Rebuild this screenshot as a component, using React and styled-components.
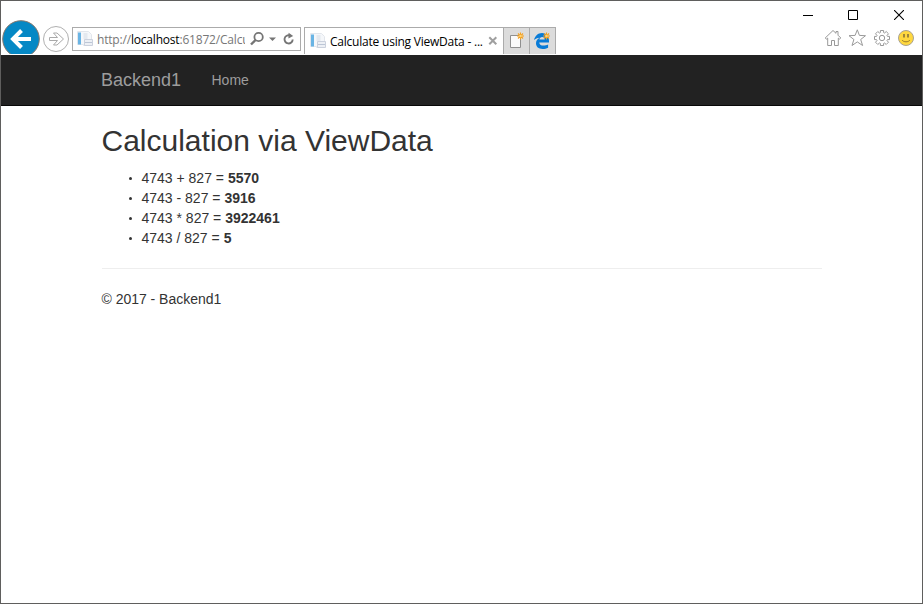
import React from "react";
import styled, { createGlobalStyle } from "styled-components";

const GlobalStyle = createGlobalStyle`
  * { box-sizing: border-box; }
  body { margin: 0; background: #fff; overflow: hidden; }
  svg { display: block; flex: none; }
`;

const BrowserWindow = styled.div`
  width: 923px;
  height: 604px;
  border: 1px solid #5f5e5d;
  background: #fff;
  display: flex;
  flex-direction: column;
  font-family: "Liberation Sans", Arial, sans-serif;
`;

const TitleBar = styled.div`
  display: flex;
  justify-content: flex-end;
  height: 19px;
  flex: none;
`;

const WindowButton = styled.div`
  width: ${(p) => p.$width}px;
  height: 28px;
  display: flex;
  align-items: center;
  justify-content: center;
`;

const Toolbar = styled.div`
  display: flex;
  height: 35px;
  flex: none;
  padding-bottom: 1px;
`;

const NavButtons = styled.div`
  display: flex;
  width: 71px;
  height: 34px;
  overflow: hidden;
`;

const AddressBar = styled.div`
  display: flex;
  align-items: center;
  width: 229px;
  height: 24px;
  margin-top: 7px;
  padding-left: 4px;
  border: 1px solid #ababab;
  background: #fff;
`;

const Url = styled.div`
  width: 148px;
  height: 20px;
  margin-left: 4px;
  overflow: hidden;
  white-space: nowrap;
  font: 12px/22px "Open Sans", "Noto Sans", sans-serif;
  letter-spacing: -0.19px;
  color: #777;
`;

const Host = styled.span`
  color: #000;
`;

const AddressActions = styled.div`
  display: flex;
  margin-left: 5px;
`;

const TabStrip = styled.div`
  display: flex;
  height: 27px;
  margin: 7px 0 0 3px;
`;

const ActiveTab = styled.div`
  display: flex;
  align-items: center;
  width: 199px;
  padding-left: 5px;
  border: solid #ababab;
  border-width: 1px 0 0 1px;
`;

const TabTitle = styled.div`
  width: 155px;
  margin: 2px 3px 0 4px;
  white-space: nowrap;
  font: 12px/20px "Open Sans", "Noto Sans", sans-serif;
  letter-spacing: -0.22px;
  color: #000;
`;

const TabButton = styled.div`
  display: flex;
  align-items: center;
  justify-content: center;
  width: 26px;
  border: solid #ababab;
  border-width: 1px 0 0 1px;
  background: #dcdcdc;
  &:last-child {
    width: 27px;
    border-right-width: 1px;
  }
`;

const Tools = styled.div`
  display: flex;
  gap: 6.4px;
  margin: 9px 7px 0 auto;
`;

const Navbar = styled.nav`
  display: flex;
  height: 51px;
  flex: none;
  padding: 15px 100px;
  border-bottom: 1px solid #080808;
  background: #222;
  color: #9d9d9d;
  line-height: 20px;
`;

const Brand = styled.div`
  width: 110.5px;
  font-size: 18px;
`;

const NavLink = styled.div`
  font-size: 14px;
`;

const Page = styled.main`
  padding: 0 100.5px;
  color: #333;
  font-size: 14px;
  line-height: 20px;
`;

const Heading = styled.h2`
  margin: 18px 0 10px;
  font-size: 30px;
  font-weight: 500;
  line-height: 33px;
`;

const Results = styled.ul`
  margin: 0;
  padding: 1px 0 0 26px;
  list-style: none;
`;

const Result = styled.li`
  display: flex;
  align-items: center;
  height: 20px;
  white-space: pre;
  &::before {
    content: "";
    width: 3.6px;
    height: 3.6px;
    margin: 1px 9px 0 1.4px;
    border-radius: 50%;
    background: #333;
  }
`;

const Rule = styled.hr`
  margin: 20px 0;
  border: 0;
  border-top: 1px solid #eee;
`;

const Footer = styled.footer`
  letter-spacing: -0.02px;
`;

const BackIcon = () => (
  <svg width="40" height="38" viewBox="1 20 40 38">
    <circle cx="21" cy="39" r="18.3" fill="#0588c5" stroke="#86776d" strokeWidth="1" />
    <path d="M31 39H13M21.5 30.5L13 39l8.5 8.5" fill="none" stroke="#fff" strokeWidth="4" />
  </svg>
);

const ForwardIcon = () => (
  <svg width="30" height="38" viewBox="41 20 30 38">
    <circle cx="56" cy="39" r="12.5" fill="#fff" stroke="#b0b0b0" />
    <path d="M49.5 37.5h8l-4-4.5h3.5l6.5 6-6.5 6h-3.5l4-4.5h-8z" fill="#fff" stroke="#aaa" />
  </svg>
);

const PageIcon = () => (
  <svg width="16" height="16" viewBox="0 0 16 16">
    <path d="M.5.5h11l3 3v11H6.5v-1h-6z" fill="#f5f7fa" stroke="#e2e6ec" />
    <path d="M1 1.5h3v12H1z" fill="#69b4e4" />
    <path d="M6.5 3h4M6.5 5h4M6.5 7h4" stroke="#d3dae4" />
    <path d="M7.5 8.5h8v6h-8z" fill="#edf0f5" stroke="#cbd1dd" />
    <path d="M8 11.5h7" stroke="#bcc6d6" />
  </svg>
);

const SearchIcon = () => (
  <svg width="15" height="16" viewBox="0 0 15 16">
    <circle cx="8.6" cy="6" r="4.2" fill="none" stroke="#757575" strokeWidth="1.8" />
    <path d="M5.5 9L1 13.5" stroke="#757575" strokeWidth="2.4" />
  </svg>
);

const CaretIcon = () => (
  <svg width="16" height="16" viewBox="0 0 16 16">
    <path d="M4 6.5h7L7.5 10z" fill="#757575" />
  </svg>
);

const RefreshIcon = () => (
  <svg width="16" height="16" viewBox="0 0 16 16">
    <path d="M9 4.5A4.1 4.1 0 1 0 11.7 8.5" fill="none" stroke="#757575" strokeWidth="1.9" />
    <path d="M7.6 1.8L12.2 5 7.4 7.6z" fill="#757575" />
  </svg>
);

const CloseTabIcon = () => (
  <svg width="10" height="10" viewBox="0 0 10 10">
    <path d="M1.3 1.3l7 7M8.3 1.3l-7 7" stroke="#9f9f9f" strokeWidth="2" />
  </svg>
);

const Spark = () => (
  <g>
    <path d="M11.5 .5v7M8 4h7M9 1.5l5 5M14 1.5l-5 5" stroke="#f5a01d" strokeWidth="1.1" />
    <circle cx="11.5" cy="4" r="1.3" fill="#ffd477" />
  </g>
);

const NewTabIcon = () => (
  <svg width="16" height="18" viewBox="0 0 16 18">
    <path d="M1.5 3.5h10v12h-10z" fill="#fafafa" stroke="#909090" />
    <Spark />
  </svg>
);

const EdgeIcon = () => (
  <svg width="18" height="18" viewBox="1 0 18 18">
    <path
      d="M1 8C2 3.8 5 1 9 1c4.5 0 7 3.2 7 8v1.4H6.2c.3 2.3 2 3.2 4.3 3.2 1.7 0 3.2-.5 4.6-1.2v3.3C13.5 16.5 11.7 17 9.6 17 5.4 17 3 14.8 3 11.3 3 8.8 4.4 6.8 6.7 5.7 4.3 5.8 2.4 6.7 1 8zm5.4-.5h5.3C11.7 5.9 10.8 5 9.2 5S6.6 6 6.4 7.5z"
      fill="#087bd7"
    />
    <g transform="translate(2 0)">
      <Spark />
    </g>
  </svg>
);

const HomeIcon = () => (
  <svg width="18" height="18" viewBox="0 0 18 18">
    <path d="M9 1.5L1.2 9l1.1 1.1 1.4-1v7.4h3.8v-5h3v5h3.8V9.1l1.4 1 1.1-1.1L14 6.2V2.5h-2v1.8z" fill="#fff" stroke="#999" strokeLinejoin="round" />
  </svg>
);

const StarIcon = () => (
  <svg width="18" height="18" viewBox="0 0 18 18">
    <path d="M9.3.8l2.1 5.6 6.1.3-4.8 3.8 1.9 6-5.3-3.6-5.3 3.6 1.9-6L1 6.7l6.1-.3z" fill="#fff" stroke="#999" strokeLinejoin="round" />
  </svg>
);

const GearIcon = () => (
  <svg width="18" height="18" viewBox="0 0 18 18">
    <path
      d="M7.4 1.5h3.2v2l1 .5L13.2 2.5l2.3 2.3L14 6.4l.5 1h2v3.2h-2l-.5 1 1.5 1.6-2.3 2.3-1.6-1.5-1 .5v2H7.4v-2l-1-.5-1.6 1.5-2.3-2.3L4 11.6l-.5-1h-2V7.4h2l.5-1-1.5-1.6 2.3-2.3L6.4 4l1-.5z"
      fill="#fff"
      stroke="#999"
      strokeLinejoin="round"
    />
    <circle cx="9" cy="9" r="2.7" fill="#fff" stroke="#999" />
  </svg>
);

const SmileIcon = () => (
  <svg width="18" height="18" viewBox="0 0 18 18">
    <circle cx="9" cy="9" r="7.5" fill="#ffd83f" stroke="#aaa393" />
    <path d="M7 5v3.6M11 5v3.6" stroke="#88733a" strokeWidth="1.6" />
    <path d="M5 11c1.6 2.4 6.4 2.4 8 0" fill="none" stroke="#9a7d2c" />
  </svg>
);

const MinimizeIcon = () => (
  <svg width="11" height="11" viewBox="0 0 11 11">
    <path d="M1 5.5h10" stroke="#000" />
  </svg>
);

const MaximizeIcon = () => (
  <svg width="10" height="10" viewBox="0 0 10 10">
    <path d="M.5.5h9v9h-9z" fill="none" stroke="#000" />
  </svg>
);

const CloseIcon = () => (
  <svg width="10" height="10" viewBox="0 0 10 10">
    <path d="M0 0l10 10M10 0L0 10" stroke="#000" strokeWidth="1.1" />
  </svg>
);

const calculations = [
  ["4743 + 827 = ", "5570"],
  ["4743 - 827 = ", "3916"],
  ["4743 * 827 = ", "3922461"],
  ["4743 / 827 = ", "5"],
];

export default function App() {
  return (
    <BrowserWindow>
      <GlobalStyle />
      <TitleBar>
        <WindowButton $width={45}><MinimizeIcon /></WindowButton>
        <WindowButton $width={46}><MaximizeIcon /></WindowButton>
        <WindowButton $width={46}><CloseIcon /></WindowButton>
      </TitleBar>
      <Toolbar>
        <NavButtons><BackIcon /><ForwardIcon /></NavButtons>
        <AddressBar>
          <PageIcon />
          <Url>http://<Host>localhost</Host>:61872/Calcu</Url>
          <AddressActions><SearchIcon /><CaretIcon /><RefreshIcon /></AddressActions>
        </AddressBar>
        <TabStrip>
          <ActiveTab>
            <PageIcon />
            <TabTitle>Calculate using ViewData - ...</TabTitle>
            <CloseTabIcon />
          </ActiveTab>
          <TabButton><NewTabIcon /></TabButton>
          <TabButton><EdgeIcon /></TabButton>
        </TabStrip>
        <Tools><HomeIcon /><StarIcon /><GearIcon /><SmileIcon /></Tools>
      </Toolbar>
      <Navbar>
        <Brand>Backend1</Brand>
        <NavLink>Home</NavLink>
      </Navbar>
      <Page>
        <Heading>Calculation via ViewData</Heading>
        <Results>
          {calculations.map(([expression, result]) => (
            <Result key={expression}>{expression}<strong>{result}</strong></Result>
          ))}
        </Results>
        <Rule />
        <Footer>© 2017 - Backend1</Footer>
      </Page>
    </BrowserWindow>
  );
}
